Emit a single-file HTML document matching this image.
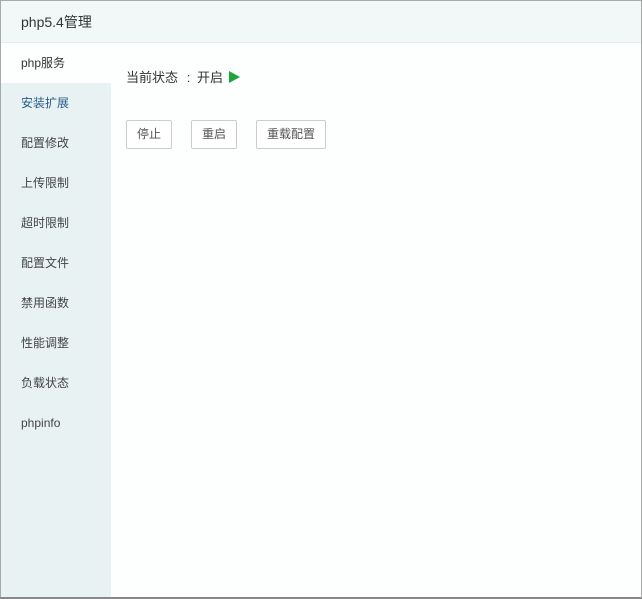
<!DOCTYPE html>
<html><head><meta charset="utf-8"><style>
*{margin:0;padding:0;box-sizing:border-box}
body{width:642px;height:599px;overflow:hidden;background:#888;font-family:"Liberation Sans","Noto Sans CJK SC",sans-serif}
.win{position:absolute;left:0;top:0;width:642px;height:598px;background:#fdfefe;border:1px solid #a9a9a9;border-bottom:1px solid #888}
.title{height:42px;background:#f2f8f8;border-bottom:1px solid #e4eded;font-size:14px;color:#333;line-height:42px;padding-left:20px}
.side{position:absolute;left:0;top:42px;width:110px;bottom:0;background:#e9f2f3}
.side div{height:40px;line-height:41px;padding-left:20px;font-size:12px;color:#444}
.side .on{background:#fdfefe;color:#333}
.side .hl{color:#2a5d8a}
.main{position:absolute;left:125px;top:42px}
.st{margin-top:27px;font-size:13px;color:#333;height:16px;line-height:16px}
.c{display:inline-block;width:13px;text-align:center;margin:0 2px 0 4px}
.tri{display:inline-block;width:0;height:0;border-left:11px solid #20a53a;border-top:6.5px solid transparent;border-bottom:6.5px solid transparent;vertical-align:-1px;margin-left:6px}
.btns{margin-top:34px;display:flex}
.b{height:29px;line-height:27px;border:1px solid #ccc;border-radius:2px;background:#fff;font-size:12px;color:#555;padding:0 10px;margin-right:19px}
</style></head><body>
<div class="win">
<div class="title">php5.4管理</div>
<div class="side">
<div class="on">php服务</div><div class="hl">安装扩展</div><div>配置修改</div><div>上传限制</div><div>超时限制</div><div>配置文件</div><div>禁用函数</div><div>性能调整</div><div>负载状态</div><div>phpinfo</div>
</div>
<div class="main">
<div class="st">当前状态<span class="c">:</span>开启<span class="tri"></span></div>
<div class="btns"><div class="b">停止</div><div class="b">重启</div><div class="b">重载配置</div></div>
</div>
</div>
</body></html>
